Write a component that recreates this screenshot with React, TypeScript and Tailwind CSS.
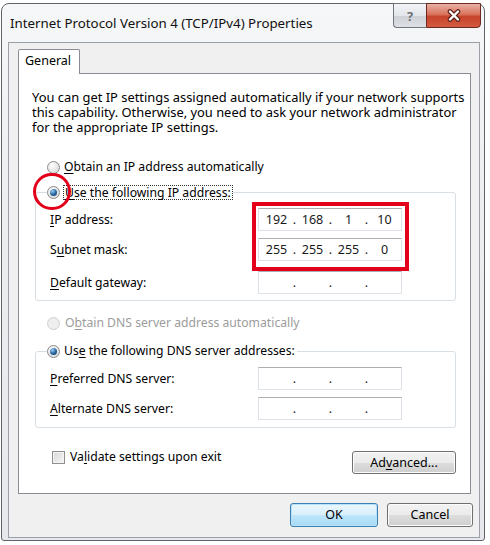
import React from 'react';

const U = ({ children }: { children: React.ReactNode }) => <span className="underline underline-offset-2">{children}</span>;

const Radio = ({ checked = false, disabled = false }: { checked?: boolean; disabled?: boolean }) => (
  <span
    className={`flex h-[13px] w-[13px] shrink-0 items-center justify-center rounded-full border ${
      disabled
        ? 'border-[#cfcfcf] bg-[#efefef]'
        : 'border-[#8a8a8a] bg-[radial-gradient(circle_at_35%_30%,#ffffff,#d2d2d2)]'
    }`}
  >
    {checked && (
      <span className="h-[7px] w-[7px] rounded-full bg-[radial-gradient(circle_at_35%_30%,#9fd0f5,#22609c_55%,#0d3765)]" />
    )}
  </span>
);

const IpField = ({ parts }: { parts?: string[] }) => (
  <div className="flex h-[23px] w-[144px] items-center border border-[#dde2e8] border-t-[#abadb3] bg-white pl-[3px] text-[12.5px] text-[#1a1a1a]">
    {[0, 1, 2, 3].map((i) => (
      <React.Fragment key={i}>
        <span className="w-[29px] text-center">{parts?.[i] ?? ''}</span>
        {i < 3 && <span className="w-[7px] text-center">.</span>}
      </React.Fragment>
    ))}
  </div>
);

const Row = ({ label, parts, className = '' }: { label: React.ReactNode; parts?: string[]; className?: string }) => (
  <div className={`flex h-[23px] items-center ${className}`}>
    <span className="w-[208px]">{label}</span>
    <IpField parts={parts} />
  </div>
);

const Button = ({ children, primary = false, className = '' }: { children: React.ReactNode; primary?: boolean; className?: string }) => (
  <div
    className={`flex items-center justify-center rounded-[3px] border ${
      primary
        ? 'border-[#3c7fb1] bg-[linear-gradient(180deg,#eaf6fd_0%,#d9f0fc_50%,#bee6fd_51%,#a7d9f5_100%)] shadow-[inset_0_0_0_1px_#b6e3fb]'
        : 'border-[#707070] bg-[linear-gradient(180deg,#f2f2f2_0%,#ebebeb_50%,#dddddd_51%,#cfcfcf_100%)] shadow-[inset_0_0_0_1px_#fcfcfc]'
    } ${className}`}
  >
    {children}
  </div>
);

const intro = [
  'You can get IP settings assigned automatically if your network supports',
  'this capability. Otherwise, you need to ask your network administrator',
  'for the appropriate IP settings.',
];

export default function App() {
  return (
    <div className="relative h-[545px] w-[490px] overflow-hidden bg-white pl-[1px] pt-[3px] font-['Noto_Sans',sans-serif] text-[12.2px] leading-[16px] text-black">
      <div className="flex h-[538px] w-[484px] flex-col rounded-t-[8px] rounded-b-[3px] border border-[#60646a] bg-[linear-gradient(180deg,#f6f7f8_0%,#eceef0_40%,#e6e8eb_100%)]">
        {/* title bar */}
        <div className="flex h-[38px] items-start justify-between pl-[8px] pr-[3px]">
          <span className="pt-[11px] text-[13.3px] text-[#111]">Internet Protocol Version 4 (TCP/IPv4) Properties</span>
          <div className="-mt-px flex h-[25px]">
            <div className="flex w-[33px] items-center justify-center rounded-bl-[4px] border border-r-0 border-[#70757c] bg-[linear-gradient(180deg,#f4f5f7_0%,#e2e5e9_50%,#cdd1d6_51%,#dde0e4_100%)] text-[13px] font-bold text-[#6e737a]">
              ?
            </div>
            <div className="flex w-[55px] items-center justify-center rounded-br-[4px] border border-[#6b2a20] bg-[linear-gradient(180deg,#eab2a5_0%,#d9735d_45%,#c7432b_55%,#d35a40_100%)]">
              <svg width="16" height="13" viewBox="0 0 16 13">
                <path d="M4 2.5 L12 10.5 M12 2.5 L4 10.5" stroke="#5b2119" strokeWidth="4.6" strokeLinecap="round" />
                <path d="M4 2.5 L12 10.5 M12 2.5 L4 10.5" stroke="#ffffff" strokeWidth="2.4" strokeLinecap="round" />
              </svg>
            </div>
          </div>
        </div>

        {/* client area */}
        <div className="ml-[6px] mr-[4px] mb-[2px] flex flex-1 flex-col border border-[#9aa0a6] bg-[#f0f0f0] pl-[9px] pr-[8px] pt-[6px]">
          <div className="relative z-10 -mb-px h-[25px] w-[62px] rounded-t-[2px] border border-b-0 border-[#898c95] bg-white pl-[6px] pt-[3px] text-[12.5px]">
            General
          </div>
          <div className="flex h-[421px] flex-col border border-[#898c95] bg-white">
            <div className="ml-[13px] mt-[16px] text-[12.9px]">
              {intro.map((line) => (
                <div key={line} className="flex h-[15px] items-center whitespace-nowrap leading-[13px]">
                  {line}
                </div>
              ))}
            </div>

            <div className="ml-[28px] mt-[24px] flex h-[16px] items-center gap-[4px]">
              <Radio />
              <span>
                <U>O</U>btain an IP address automatically
              </span>
            </div>

            <fieldset className="ml-[16px] mr-[14px] mt-[9px] rounded-[3px] border border-[#d8dfe4] pb-[6px] pl-[14px]">
              <legend className="-ml-[3px] flex h-[16px] items-center gap-[3px]">
                <Radio checked />
                <span className="border border-dotted border-[#333] px-[1px] leading-[13px]">
                  <U>U</U>se the following IP address:
                </span>
              </legend>
              <Row className="mt-[8px]" label={<><U>I</U>P address:</>} parts={['192', '168', '1', '10']} />
              <Row className="mt-[7px]" label={<>S<U>u</U>bnet mask:</>} parts={['255', '255', '255', '0']} />
              <Row className="mt-[10px]" label={<><U>D</U>efault gateway:</>} />
            </fieldset>

            <div className="ml-[28px] mt-[14px] flex h-[16px] items-center gap-[5px] text-[#9c9c9c]">
              <Radio disabled />
              <span>
                O<U>b</U>tain DNS server address automatically
              </span>
            </div>

            <fieldset className="ml-[16px] mr-[14px] mt-[12px] rounded-[3px] border border-[#d8dfe4] pb-[7px] pl-[14px]">
              <legend className="-ml-[3px] flex h-[16px] items-center gap-[4px] pr-[2px]">
                <Radio checked />
                <span>
                  Us<U>e</U> the following DNS server addresses:
                </span>
              </legend>
              <Row className="mt-[8px]" label={<><U>P</U>referred DNS server:</>} />
              <Row className="mt-[7px]" label={<><U>A</U>lternate DNS server:</>} />
            </fieldset>

            <div className="ml-[33px] mr-[14px] mt-[21px] flex items-start justify-between">
              <div className="flex h-[16px] items-center gap-[5px]">
                <span className="h-[13px] w-[13px] border border-[#8f8f8f] bg-[linear-gradient(135deg,#d8d8d8,#f6f6f6)] shadow-[inset_0_0_0_1px_#f4f4f4]" />
                <span>
                  Va<U>l</U>idate settings upon exit
                </span>
              </div>
              <Button className="mt-[2px] h-[23px] w-[104px] text-[12.5px]">
                <span>
                  Ad<U>v</U>anced...
                </span>
              </Button>
            </div>
          </div>

          <div className="-mr-[2px] mt-[9px] flex justify-end gap-[9px] text-[12.5px]">
            <Button primary className="h-[24px] w-[88px]">
              OK
            </Button>
            <Button className="h-[24px] w-[86px]">Cancel</Button>
          </div>
        </div>
      </div>

      {/* annotations */}
      <div className="absolute left-[33px] top-[173px] h-[37px] w-[38px] rounded-full border-[3px] border-[#e3001b]" />
      <div className="absolute left-[252px] top-[202px] h-[69px] w-[157px] border-4 border-[#e3001b]" />
    </div>
  );
}
